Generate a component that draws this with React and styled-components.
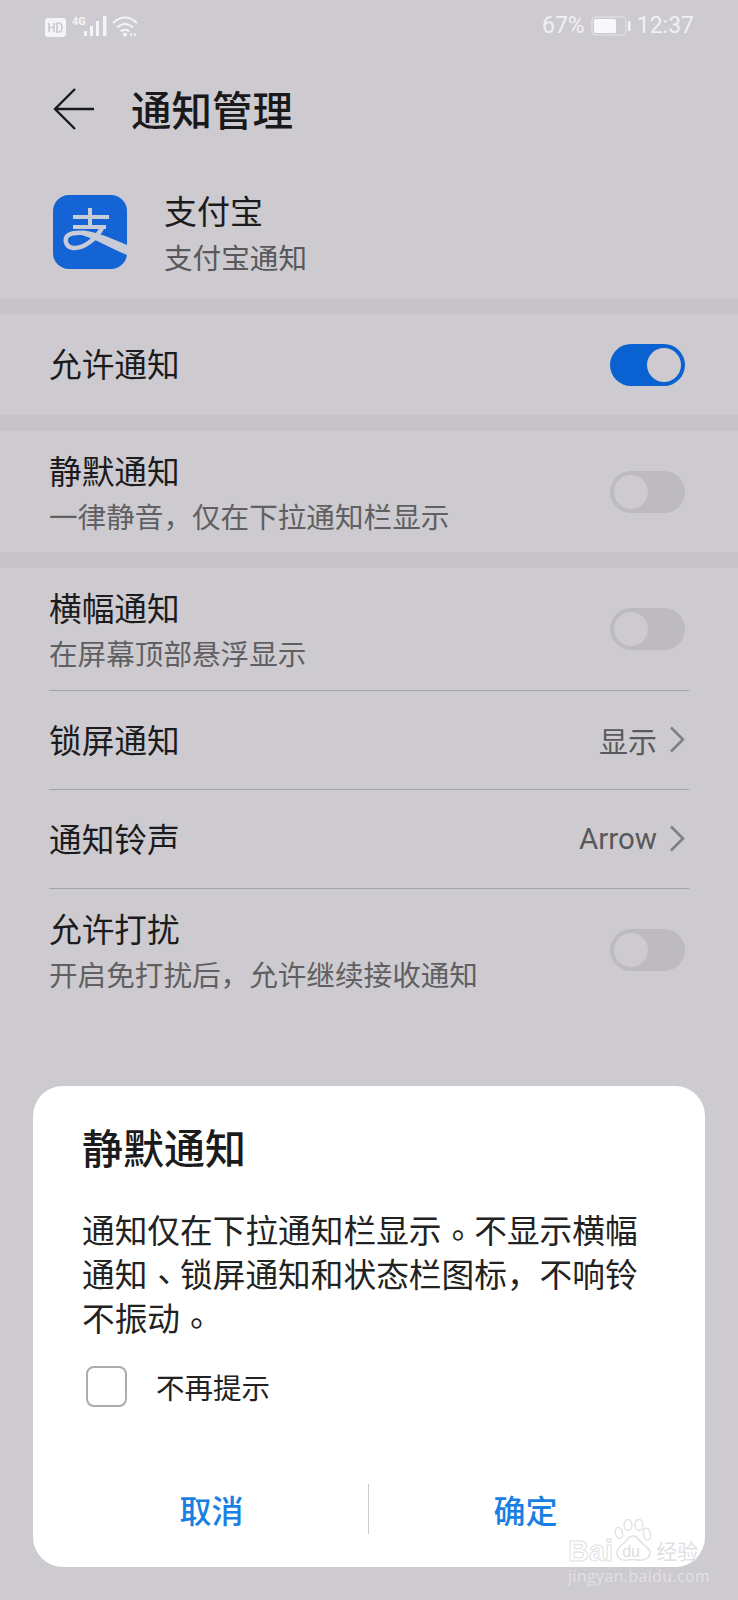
import React from "react";
import styled, { createGlobalStyle } from "styled-components";

const Global = createGlobalStyle`
  html, body { margin: 0; padding: 0; background: #cdcbcf; }
  body { font-family: "Noto Sans CJK SC", "Noto Sans", sans-serif; }
`;
const Page = styled.div`
  position: relative; width: 738px; height: 1600px; overflow: hidden; background: #cdcbcf;
`;
const StatusBar = styled.div`
  height: 50px; display: flex; align-items: center; justify-content: space-between;
  padding: 1px 44px 0; box-sizing: border-box; color: #f1f0f2;
  font-family: Roboto, sans-serif; font-size: 23px;
`;
const StatusGroup = styled.div`display: flex; align-items: center; gap: 6px;`;
const Header = styled.div`
  height: 124px; display: flex; align-items: center; padding: 0 0 6px 53px; box-sizing: border-box; gap: 36px;
`;
const Title = styled.div`font-size: 40.5px; font-weight: 500; color: #19181a; line-height: 1;`;
const AppRow = styled.div`
  height: 124px; display: flex; align-items: center; padding: 0 0 8px 53px; box-sizing: border-box; gap: 37px;
`;
const AppText = styled.div`padding-top: 3px;`;
const AppName = styled.div`font-size: 33px; color: #1c1b1d; line-height: 46px; margin-top: -2px;`;
const AppSub = styled.div`font-size: 28.6px; color: #59585b; line-height: 44px; margin-top: 2px;`;
const Band = styled.div`height: 16px; background: #c6c4c8;`;
const Row = styled.div`
  height: ${p => p.$h}px; margin: 0 49px; display: flex; align-items: center; justify-content: space-between;
  box-sizing: border-box; border-bottom: ${p => p.$line ? "1px solid #a4a3a6" : "none"};
`;
const Label = styled.div`font-size: 32.7px; color: #1c1b1d; line-height: 46px;`;
const SingleLabel = styled(Label)`margin-bottom: 3px;`;
const Sub = styled.div`font-size: 28.6px; color: #605f62; line-height: 42px; margin-top: 2px;`;
const Track = styled.div`
  width: 75px; height: 42px; border-radius: 21px; box-sizing: border-box; padding: 4px;
  margin: 0 4px 0 0; display: flex; justify-content: ${p => p.$on ? "flex-end" : "flex-start"};
  background: ${p => p.$on ? "#0a62d2" : "#bdbbbf"};
`;
const Thumb = styled.div`width: 34px; height: 34px; border-radius: 50%; background: #cdcbcf;`;
const Value = styled.div`
  display: flex; align-items: center; gap: 12px; font-size: 29px; color: #59585b; margin: 0 4px 1px 0;
`;
const ValueLatin = styled.span`font-family: Roboto, sans-serif; font-size: 29.5px;`;
const Dialog = styled.div`
  position: absolute; left: 33px; top: 1086px; width: 672px; height: 481px; background: #fff;
  border-radius: 30px; box-sizing: border-box; padding: 32px 49px 0; display: flex; flex-direction: column;
`;
const DialogTitle = styled.div`font-size: 41px; font-weight: 500; color: #1b1b1b; line-height: 56px;`;
const DialogBody = styled.div`font-size: 32.7px; color: #222; line-height: 44px; margin-top: 33px; width: 574px;`;
const Punct = styled.span`font-family: "Noto Sans CJK TC", sans-serif; line-height: 1; vertical-align: -5px;`;
const Check = styled.div`display: flex; align-items: center; gap: 29px; margin: 27px 0 0 4px; font-size: 28.5px; color: #222;`;
const Box = styled.div`width: 41px; height: 41px; box-sizing: border-box; border: 2px solid #acacac; border-radius: 8px;`;
const Actions = styled.div`
  display: flex; align-items: center; margin: 76px 0 0 -27px; width: 627px; height: 52px;
`;
const Action = styled.div`flex: 1; text-align: center; color: #1a7fe2; font-size: 32px; font-weight: 500;`;
const Divider = styled.div`width: 1px; height: 50px; background: #cccccc;`;
const Watermark = styled.div`
  position: absolute; left: 568px; top: 1519px; width: 132px; display: flex; flex-direction: column; align-items: flex-start;
  pointer-events: none;
`;
const WmTop = styled.div`display: flex; align-items: flex-end; height: 44px;`;
const WmBai = styled.span`
  font-family: "Liberation Sans", sans-serif; font-weight: 700; font-size: 29px; line-height: 24px; letter-spacing: 0;
  color: rgba(255,255,255,.6); -webkit-text-stroke: 1px #e2e2e3;
`;
const Paw = styled.div`position: relative; width: 40px; height: 44px; flex: none;`;
const PawText = styled.span`
  position: absolute; left: 9px; bottom: 3px; font-family: "Liberation Sans", sans-serif; font-size: 16px; line-height: 16px; color: #dcdcde;
`;
const WmCn = styled.span`font-size: 21px; line-height: 26px; margin-left: 3px; color: #e0e0e2; font-family: "Noto Sans CJK SC", sans-serif;`;
const WmUrl = styled.div`font-family: "Open Sans", sans-serif; font-size: 15.6px; letter-spacing: .55px; line-height: 20px; margin-top: 3px; color: #e2e1e4; white-space: nowrap;`;

const Chevron = () => (
  <svg width="16" height="27" viewBox="0 0 16 27" fill="none"><path d="M2 1.500l12 12L2 25.500" stroke="#807f82" strokeWidth="2.600"/></svg>
);
const Switch = ({ on }) => <Track $on={on}><Thumb /></Track>;

export default function App() {
  return (
    <Page>
      <Global />
      <StatusBar>
        <StatusGroup>
          <svg width="96" height="28" viewBox="0 0 96 28" fill="#f4f3f5">
            <rect x="1" y="6" width="21" height="19" rx="3" />
            <path d="M5 11v9M10 11v9M5 15.500h5M13 11v9h2a3 4.500 0 0 0 0-9z" stroke="#cdcbcf" strokeWidth="1.700" fill="none" />
            <text x="28" y="13" fontSize="11" fontFamily="Roboto" fontWeight="700">4G</text>
            <rect x="40" y="19" width="3" height="5" /><rect x="46" y="14" width="3" height="10" /><rect x="52" y="9" width="3" height="15" /><rect x="59" y="4" width="3.500" height="20" />
            <g fill="none" stroke="#f4f3f5" strokeWidth="2">
              <path d="M69 11q12-11 24 0" /><path d="M73 15.500q8-7 16 0" /><path d="M76.500 19.500q4.500-3.500 9 0" />
            </g>
            <circle cx="81" cy="22.500" r="2" />
            <path d="M88 20.500v4l-2.500-2zM90 20.500v4l2.500-2z" />
          </svg>
        </StatusGroup>
        <StatusGroup>
          <span>67%</span>
          <svg width="40" height="20" viewBox="0 0 40 20" fill="none">
            <rect x="1" y="1" width="34" height="18" rx="3.500" stroke="#e6e5e8" strokeWidth="1" />
            <rect x="3" y="3" width="22" height="14" rx="1.500" fill="#f8f7f9" />
            <rect x="37" y="5" width="2.500" height="10" rx="1" fill="#f4f3f5" />
          </svg>
          <span>12:37</span>
        </StatusGroup>
      </StatusBar>
      <Header>
        <svg width="42" height="42" viewBox="0 0 42 42" fill="none">
          <path d="M41 21H2M22 1L2 21l20 20" stroke="#1a191b" strokeWidth="2.400" />
        </svg>
        <Title>通知管理</Title>
      </Header>
      <AppRow>
        <svg width="74" height="74" viewBox="0 0 74 74">
          <rect width="74" height="74" rx="16" fill="#1464d6" />
          <g fill="none" stroke="#c9ccd6">
            <path d="M20 22h36M37 13v19M20 32h33" strokeWidth="4" />
            <path d="M50 31C44 44 30 54 20 53C13 52 12 46 13 43C15 38 24 37 32 38" strokeWidth="4.500" />
          </g>
          <path d="M30 35.500C45 37 60 44 74 50V60C55 52 42 44 30 40.500z" fill="#c9ccd6" />
        </svg>
        <AppText>
          <AppName>支付宝</AppName>
          <AppSub>支付宝通知</AppSub>
        </AppText>
      </AppRow>
      <Band />
      <Row $h={101}><SingleLabel>允许通知</SingleLabel><Switch on /></Row>
      <Band />
      <Row $h={121}>
        <div><Label>静默通知</Label><Sub>一律静音，仅在下拉通知栏显示</Sub></div>
        <Switch />
      </Row>
      <Band />
      <Row $h={123} $line>
        <div><Label>横幅通知</Label><Sub>在屏幕顶部悬浮显示</Sub></div>
        <Switch />
      </Row>
      <Row $h={99} $line>
        <SingleLabel>锁屏通知</SingleLabel>
        <Value>显示<Chevron /></Value>
      </Row>
      <Row $h={99} $line>
        <SingleLabel>通知铃声</SingleLabel>
        <Value><ValueLatin>Arrow</ValueLatin><Chevron /></Value>
      </Row>
      <Row $h={121}>
        <div><Label>允许打扰</Label><Sub>开启免打扰后，允许继续接收通知</Sub></div>
        <Switch />
      </Row>
      <Dialog>
        <DialogTitle>静默通知</DialogTitle>
        <DialogBody>通知仅在下拉通知栏显示<Punct>。</Punct>不显示横幅通知<Punct>、</Punct>锁屏通知和状态栏图标，不响铃不振动<Punct>。</Punct></DialogBody>
        <Check><Box />不再提示</Check>
        <Actions>
          <Action>取消</Action>
          <Divider />
          <Action>确定</Action>
        </Actions>
      </Dialog>
      <Watermark>
        <WmTop>
          <WmBai>Bai</WmBai>
          <Paw>
            <svg width="40" height="44" viewBox="0 0 40 44" fill="none" stroke="#e0e0e1" strokeWidth="1.300">
              <ellipse cx="6" cy="14" rx="3.500" ry="5.500" transform="rotate(-15 6 14)" />
              <ellipse cx="15" cy="6" rx="4" ry="5.500" />
              <ellipse cx="26" cy="6" rx="4" ry="5.500" />
              <ellipse cx="34" cy="15" rx="3.500" ry="6" transform="rotate(-15 34 15)" />
              <path d="M20 17c-5 0-6 5-10 8-4 3-7 6-6 10 1 5 6 7 11 6 3-.5 7-.5 10 0 5 1 11-1 12-6 1-4-3-7-7-10-4-3-5-8-10-8z" />
            </svg>
            <PawText>du</PawText>
          </Paw>
          <WmCn>经验</WmCn>
        </WmTop>
        <WmUrl>jingyan.baidu.com</WmUrl>
      </Watermark>
    </Page>
  );
}
